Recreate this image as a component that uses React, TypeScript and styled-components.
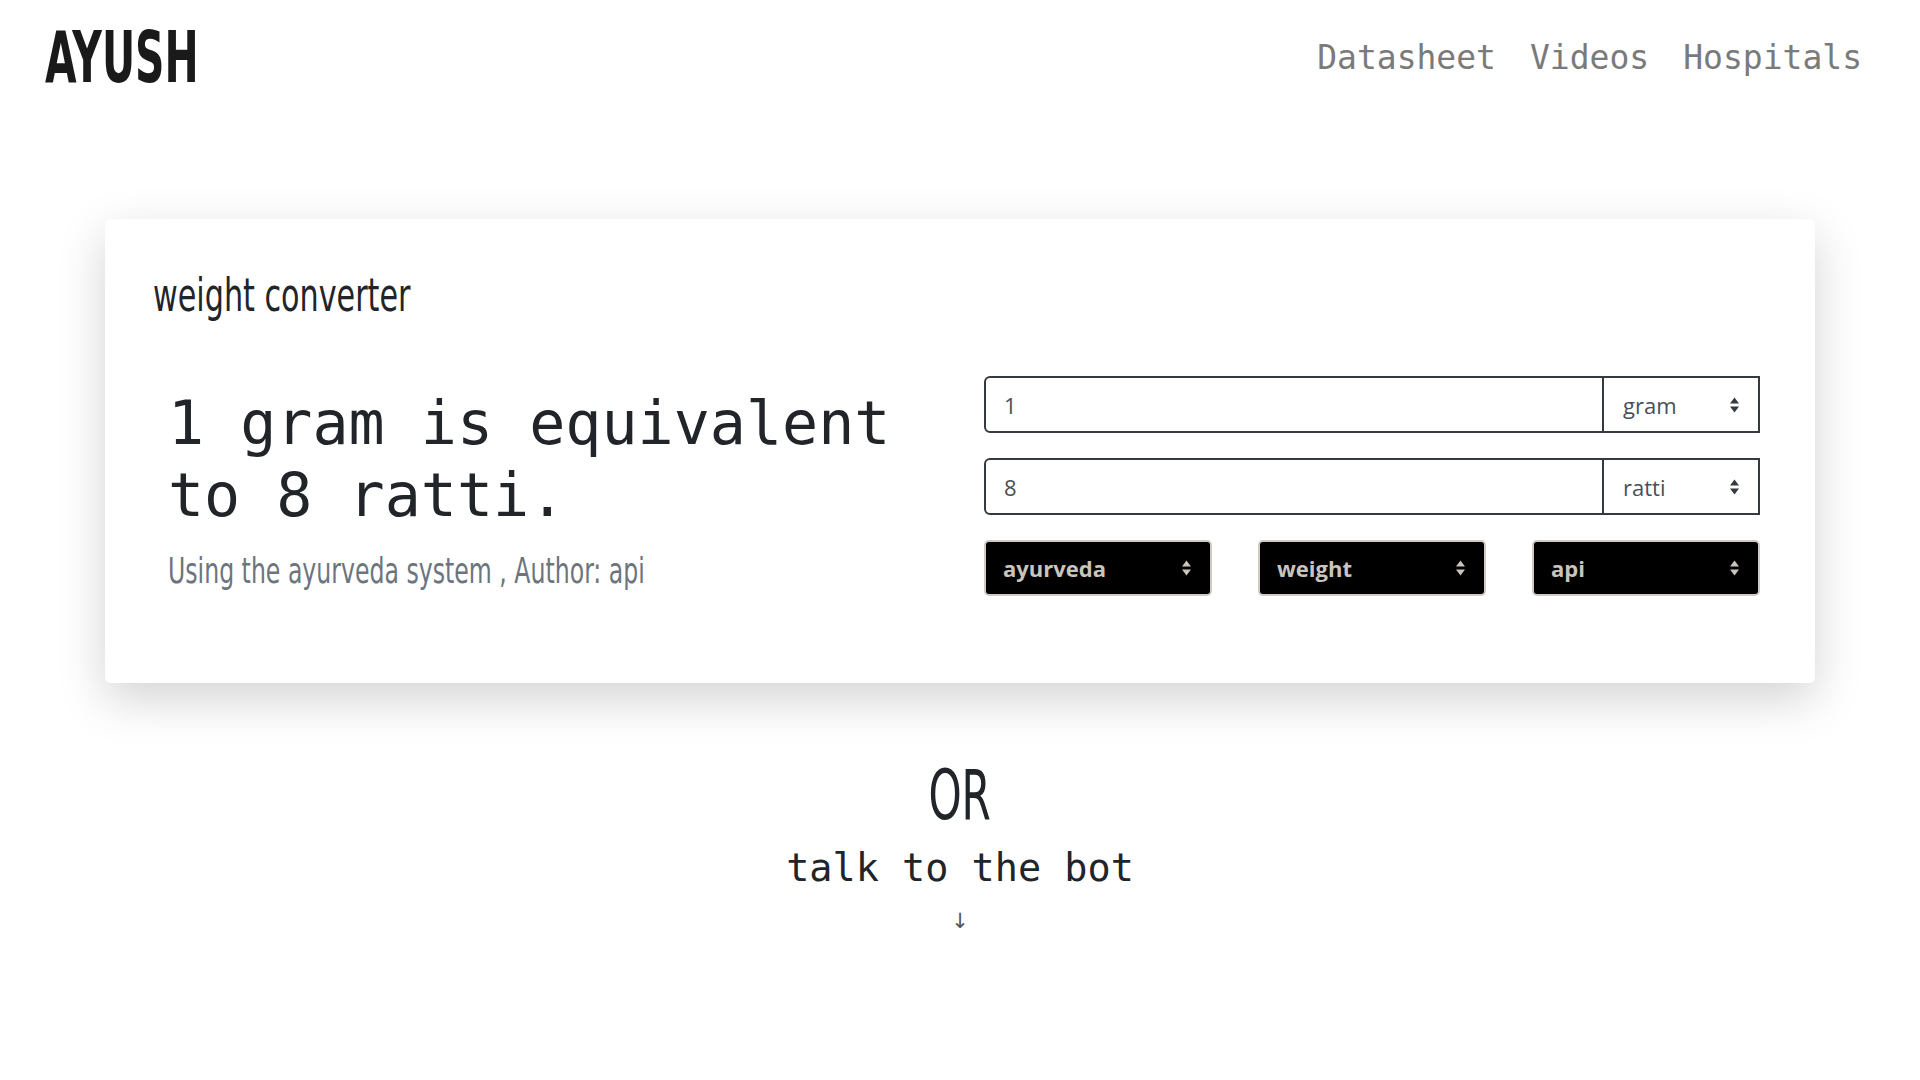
import React from "react";
import styled, { createGlobalStyle } from "styled-components";

const GlobalStyle = createGlobalStyle`
  html, body { margin: 0; padding: 0; background: #ffffff; }
  body {
    font-family: "Open Sans", "Noto Sans", sans-serif;
    color: #212529;
  }
  * { box-sizing: border-box; }
`;

const condensed = `"Liberation Sans Narrow", "DejaVu Sans Condensed", "Arial Narrow", sans-serif`;
const mono = `"DejaVu Sans Mono", "Liberation Mono", monospace`;

const Page = styled.div`
  min-height: 1080px;
  display: flex;
  flex-direction: column;
`;

const Navbar = styled.nav`
  display: flex;
  align-items: center;
  justify-content: space-between;
  height: 114px;
  padding: 0 41px 0 45px;
`;

const Brand = styled.a`
  font-family: ${condensed};
  font-stretch: condensed;
  font-weight: 700;
  font-size: 71px;
  line-height: 1;
  color: #1a1a1a;
  text-decoration: none;
  display: inline-block;
  transform: scaleX(0.64);
  transform-origin: left center;
`;

const NavLinks = styled.ul`
  display: flex;
  list-style: none;
  margin: 0;
  padding: 0;
`;

const NavLink = styled.a`
  display: block;
  padding: 0 17px;
  font-family: ${mono};
  font-size: 33px;
  color: #7a7a7a;
  text-decoration: none;
`;

const Card = styled.section`
  margin: 105px 105px 0;
  background: #fff;
  border-radius: 6px;
  box-shadow: 0 1rem 3rem rgba(0, 0, 0, 0.175);
  padding: 49px 55px 87px 48px;
`;

const CardTitle = styled.h2`
  margin: 0;
  font-family: ${condensed};
  font-stretch: condensed;
  font-weight: 400;
  font-size: 46px;
  line-height: 1.2;
  color: #212529;
  display: inline-block;
  transform: scaleX(0.73);
  transform-origin: left center;
  white-space: nowrap;
`;

const CardBody = styled.div`
  display: grid;
  grid-template-columns: 1fr 776px;
  align-items: center;
  margin-top: 53px;
`;

const Result = styled.div`
  padding: 6px 0 0 15px;
`;

const Equivalence = styled.h1`
  margin: 0;
  font-family: ${mono};
  font-weight: 400;
  font-size: 60px;
  line-height: 1.2;
  color: #212529;
`;

const Meta = styled.p`
  margin: 19px 0 0;
  font-family: ${condensed};
  font-stretch: condensed;
  font-size: 35px;
  line-height: 1.2;
  color: #6c757d;
  display: inline-block;
  transform: scaleX(0.75);
  transform-origin: left center;
  white-space: nowrap;
`;

const Controls = styled.div`
  display: flex;
  flex-direction: column;
  gap: 25px;
`;

const InputGroup = styled.div`
  display: flex;
  height: 57px;
`;

const NumberInput = styled.input`
  flex: 1;
  min-width: 0;
  height: 100%;
  border: 2px solid #343a40;
  border-radius: 6px 0 0 6px;
  padding: 0 18px;
  font-family: "Open Sans", "Noto Sans", sans-serif;
  font-size: 22px;
  color: #495057;
  background: #fff;
  outline: none;
`;

const SelectWrap = styled.div<{ $width?: string }>`
  position: relative;
  width: ${(p) => p.$width || "auto"};
  height: 100%;
`;

const UnitSelect = styled.select`
  appearance: none;
  -webkit-appearance: none;
  width: 100%;
  height: 100%;
  border: 2px solid #343a40;
  border-left: none;
  border-radius: 0;
  padding: 0 40px 0 19px;
  font-family: "Open Sans", "Noto Sans", sans-serif;
  font-size: 22px;
  color: #495057;
  background: #fff;
  outline: none;
`;

const FilterRow = styled.div`
  display: grid;
  grid-template-columns: repeat(3, 1fr);
  column-gap: 46px;
  height: 56px;
`;

const DarkSelect = styled.select`
  appearance: none;
  -webkit-appearance: none;
  width: 100%;
  height: 100%;
  background: #000;
  border: 2px solid #cfcac4;
  border-radius: 5px;
  padding: 0 40px 0 17px;
  font-family: "Open Sans", "Noto Sans", sans-serif;
  font-weight: 700;
  font-size: 22px;
  color: #c9c4be;
  outline: none;
`;

const Arrow = styled.svg`
  position: absolute;
  right: 20px;
  top: 50%;
  transform: translateY(-50%);
  pointer-events: none;
`;

const Bot = styled.section`
  display: flex;
  flex-direction: column;
  align-items: center;
  margin-top: 70px;
`;

const Or = styled.h2`
  margin: 0;
  font-family: ${condensed};
  font-stretch: condensed;
  font-weight: 400;
  font-size: 70px;
  line-height: 1.2;
  color: #212529;
  transform: scaleX(0.67);
`;

const Talk = styled.p`
  margin: 8px 0 0;
  font-family: ${mono};
  font-size: 38.5px;
  line-height: 1.2;
  color: #212529;
`;

const Down = styled.span`
  margin-top: 18px;
  font-family: "DejaVu Sans", sans-serif;
  font-size: 21px;
  color: #555;
`;

const Chevrons = ({ color }: { color: string }) => (
  <Arrow width="11" height="17" viewBox="0 0 11 17">
    <path d="M5.5 1 L10 7 L1 7 Z" fill={color} />
    <path d="M5.5 16 L10 10 L1 10 Z" fill={color} />
  </Arrow>
);

const UnitRow = ({ value, unit }: { value: string; unit: string }) => (
  <InputGroup>
    <NumberInput type="text" defaultValue={value} />
    <SelectWrap $width="156px">
      <UnitSelect defaultValue={unit}>
        <option value="gram">gram</option>
        <option value="ratti">ratti</option>
        <option value="tola">tola</option>
      </UnitSelect>
      <Chevrons color="#343a40" />
    </SelectWrap>
  </InputGroup>
);

const Filter = ({ value }: { value: string }) => (
  <SelectWrap>
    <DarkSelect defaultValue={value}>
      <option value={value}>{value}</option>
    </DarkSelect>
    <Chevrons color="#c9c4be" />
  </SelectWrap>
);

export default function App() {
  return (
    <Page>
      <GlobalStyle />
      <Navbar>
        <Brand href="#">AYUSH</Brand>
        <NavLinks>
          <li><NavLink href="#">Datasheet</NavLink></li>
          <li><NavLink href="#">Videos</NavLink></li>
          <li><NavLink href="#">Hospitals</NavLink></li>
        </NavLinks>
      </Navbar>

      <Card>
        <CardTitle>weight converter</CardTitle>
        <CardBody>
          <Result>
            <Equivalence>1 gram is equivalent to 8 ratti.</Equivalence>
            <Meta>Using the ayurveda system , Author: api</Meta>
          </Result>
          <Controls>
            <UnitRow value="1" unit="gram" />
            <UnitRow value="8" unit="ratti" />
            <FilterRow>
              <Filter value="ayurveda" />
              <Filter value="weight" />
              <Filter value="api" />
            </FilterRow>
          </Controls>
        </CardBody>
      </Card>

      <Bot>
        <Or>OR</Or>
        <Talk>talk to the bot</Talk>
        <Down>↓</Down>
      </Bot>
    </Page>
  );
}
